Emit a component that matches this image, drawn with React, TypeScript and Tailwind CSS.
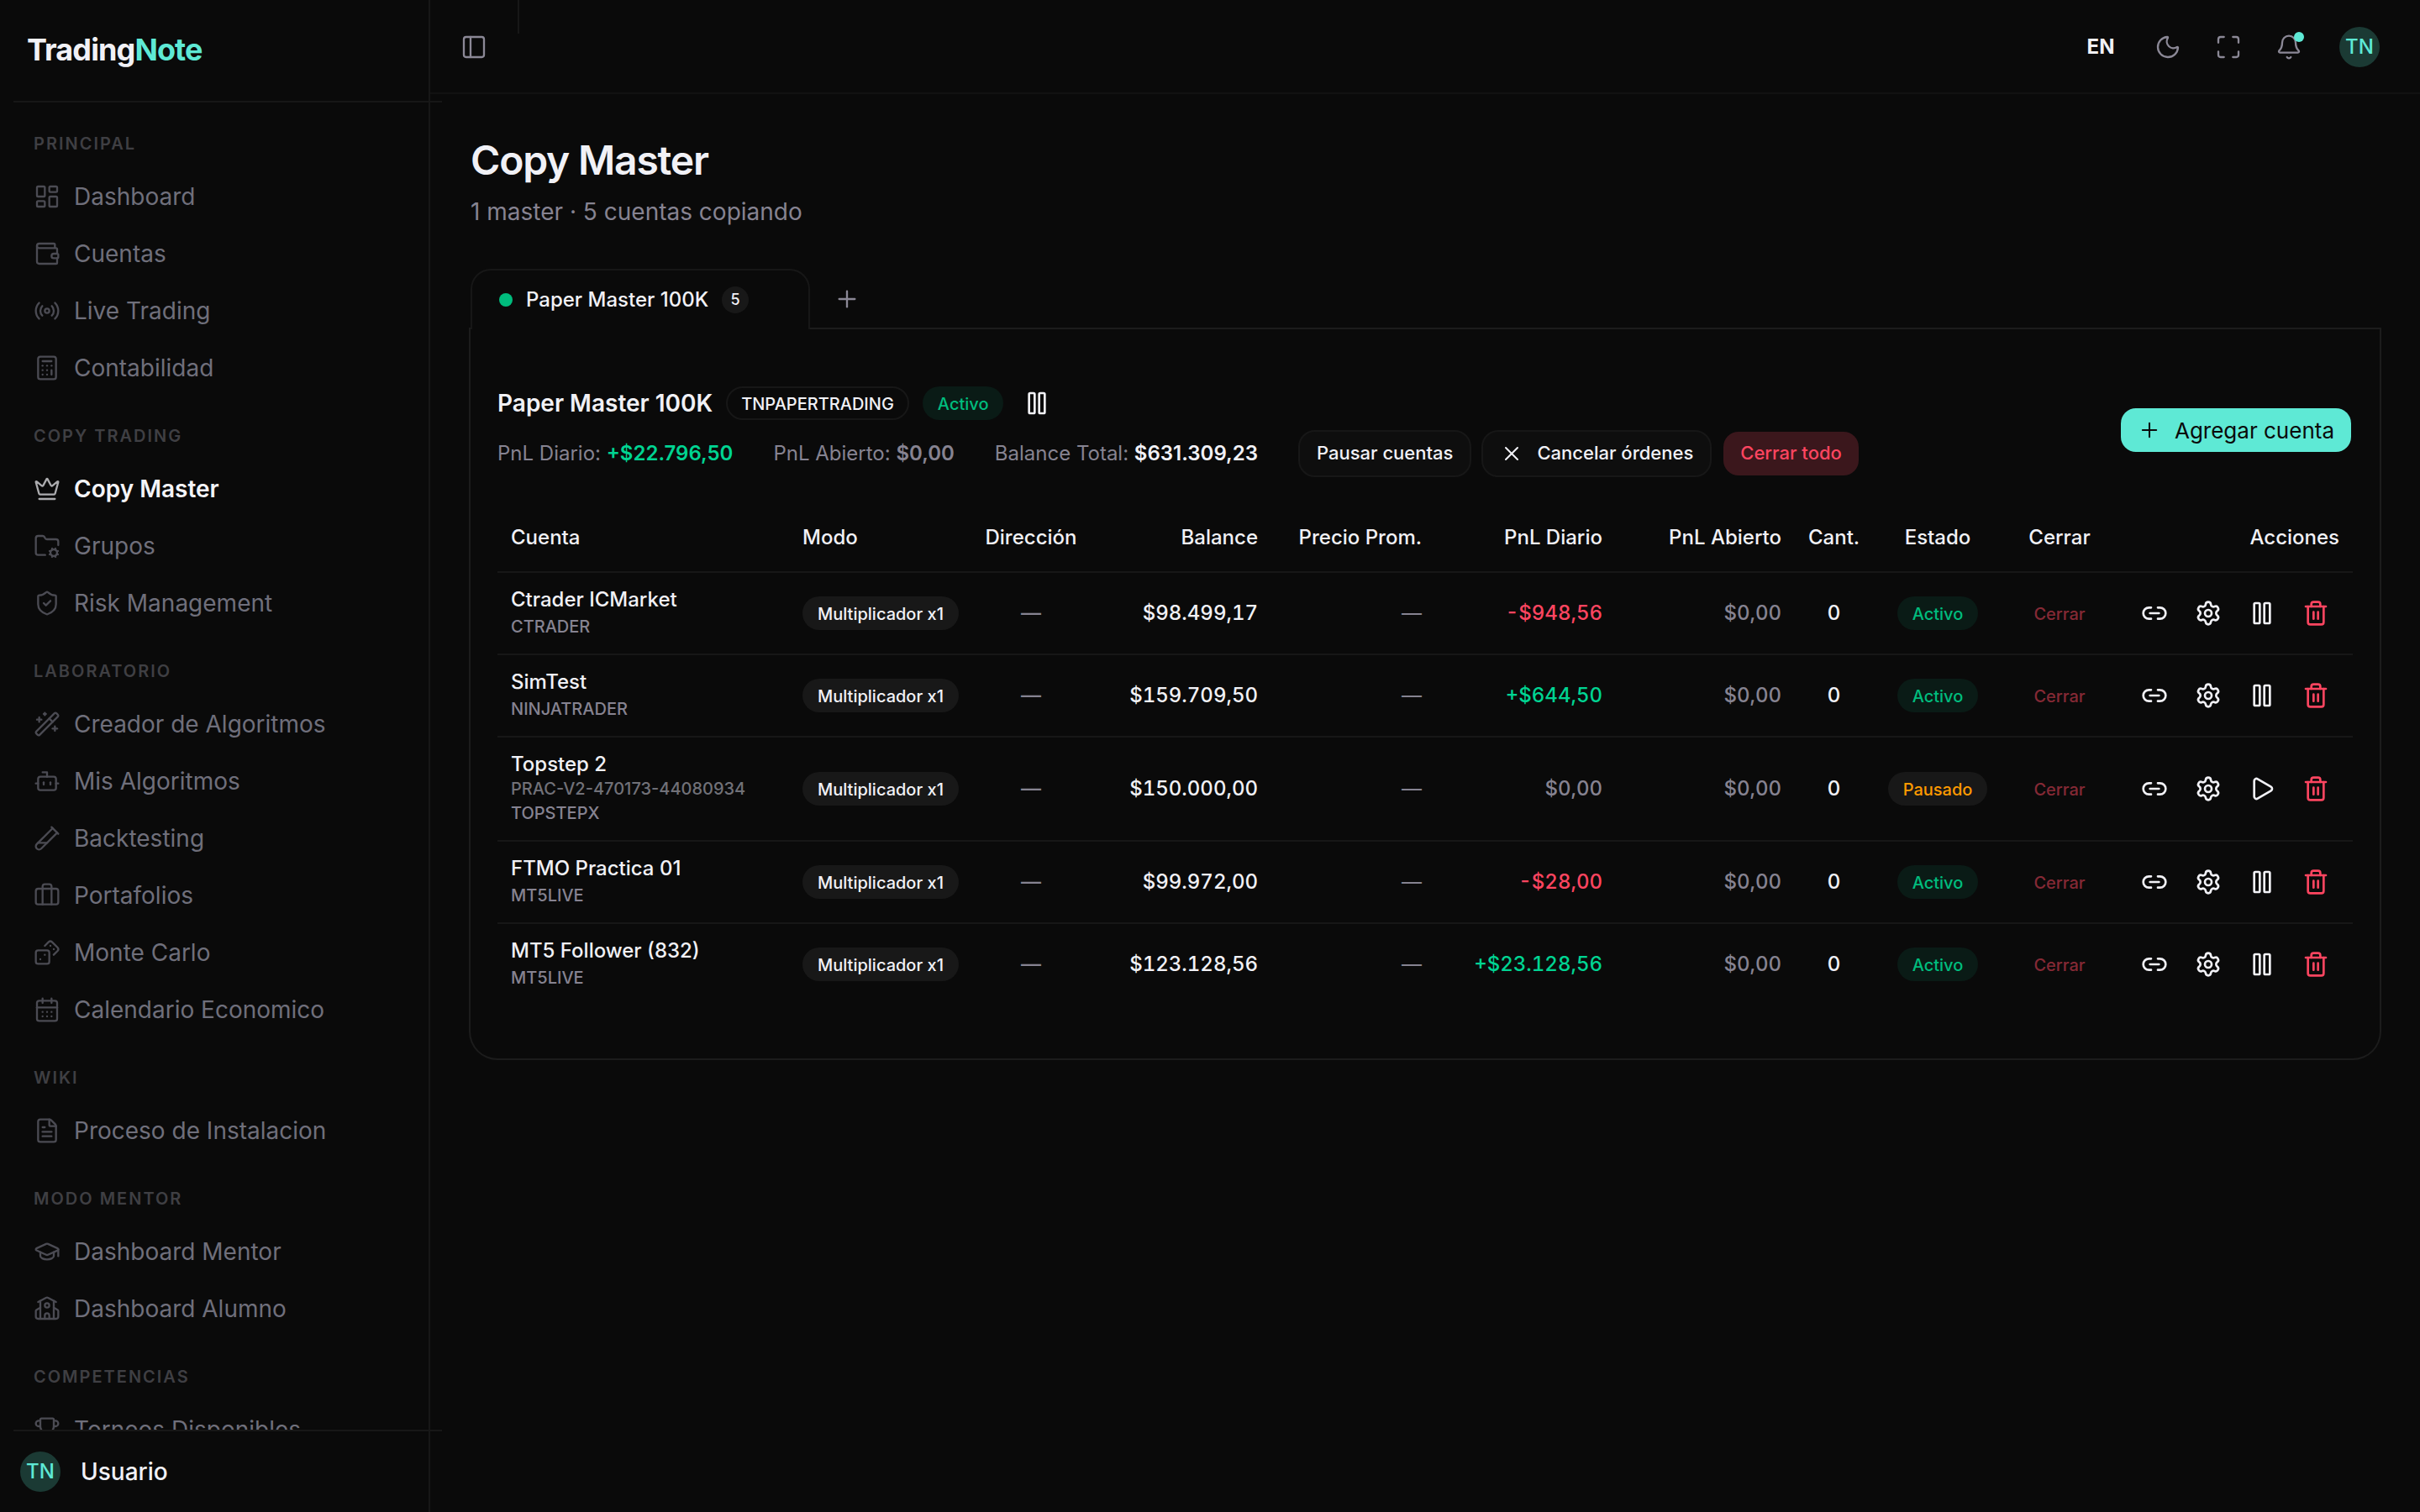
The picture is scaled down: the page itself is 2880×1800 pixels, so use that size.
import React from "react";
import {
  Bell,
  Bot,
  Briefcase,
  Calculator,
  CalendarDays,
  Crown,
  Dices,
  FileText,
  FolderCog,
  GraduationCap,
  LayoutDashboard,
  Link2,
  LucideIcon,
  Maximize,
  Moon,
  PanelLeft,
  Pause,
  Play,
  Plus,
  Radio,
  School,
  Settings,
  ShieldCheck,
  TestTubeDiagonal,
  Trash2,
  Trophy,
  Wallet,
  WandSparkles,
  X,
} from "lucide-react";

interface INavItem {
  label: string;
  icon: LucideIcon;
  active?: boolean;
}

interface INavGroup {
  title: string;
  items: INavItem[];
}

interface IAccount {
  name: string;
  detail?: string;
  platform: string;
  balance: string;
  daily: string;
  paused?: boolean;
}

const navGroups: INavGroup[] = [
  {
    title: "PRINCIPAL",
    items: [
      { label: "Dashboard", icon: LayoutDashboard },
      { label: "Cuentas", icon: Wallet },
      { label: "Live Trading", icon: Radio },
      { label: "Contabilidad", icon: Calculator },
    ],
  },
  {
    title: "COPY TRADING",
    items: [
      { label: "Copy Master", icon: Crown, active: true },
      { label: "Grupos", icon: FolderCog },
      { label: "Risk Management", icon: ShieldCheck },
    ],
  },
  {
    title: "LABORATORIO",
    items: [
      { label: "Creador de Algoritmos", icon: WandSparkles },
      { label: "Mis Algoritmos", icon: Bot },
      { label: "Backtesting", icon: TestTubeDiagonal },
      { label: "Portafolios", icon: Briefcase },
      { label: "Monte Carlo", icon: Dices },
      { label: "Calendario Economico", icon: CalendarDays },
    ],
  },
  {
    title: "WIKI",
    items: [{ label: "Proceso de Instalacion", icon: FileText }],
  },
  {
    title: "MODO MENTOR",
    items: [
      { label: "Dashboard Mentor", icon: GraduationCap },
      { label: "Dashboard Alumno", icon: School },
    ],
  },
  {
    title: "COMPETENCIAS",
    items: [{ label: "Torneos Disponibles", icon: Trophy }],
  },
];

const accounts: IAccount[] = [
  { name: "Ctrader ICMarket", platform: "CTRADER", balance: "$98.499,17", daily: "-$948,56" },
  { name: "SimTest", platform: "NINJATRADER", balance: "$159.709,50", daily: "+$644,50" },
  {
    name: "Topstep 2",
    detail: "PRAC-V2-470173-44080934",
    platform: "TOPSTEPX",
    balance: "$150.000,00",
    daily: "$0,00",
    paused: true,
  },
  { name: "FTMO Practica 01", platform: "MT5LIVE", balance: "$99.972,00", daily: "-$28,00" },
  { name: "MT5 Follower (832)", platform: "MT5LIVE", balance: "$123.128,56", daily: "+$23.128,56" },
];

// green for gains, red for losses, grey when flat
const pnlColor = (value: string) => {
  if (value.startsWith("+")) return "text-[#00d492]";
  if (value.startsWith("-")) return "text-[#ff4560]";
  return "text-[#868391]";
};

function Avatar() {
  return (
    <span className="flex size-12 shrink-0 items-center justify-center rounded-full bg-[#1b3a34] text-2xl font-medium text-[#5ee9d5]">
      TN
    </span>
  );
}

function StatusBadge({ paused = false }: { paused?: boolean }) {
  return (
    <span
      className={`inline-flex h-10 items-center rounded-full px-[18px] pt-0.5 text-xl font-medium whitespace-nowrap ${
        paused ? "bg-[#181818] text-[#fe9a00]" : "bg-[#0a1b16] text-[#00bc7d]"
      }`}
    >
      {paused ? "Pausado" : "Activo"}
    </span>
  );
}

function Sidebar() {
  return (
    <aside className="flex w-[512px] shrink-0 flex-col border-r-2 border-[#171717]">
      <div className="flex h-[120px] items-center pb-0.5 pl-8">
        <a href="#" className="text-4xl font-bold tracking-tight">
          Trading<span className="text-[#5ee9d5]">Note</span>
        </a>
      </div>
      <div className="ml-4 h-0.5 w-full shrink-0 bg-[#171717]" />
      <nav className="flex min-h-0 flex-1 flex-col gap-4 overflow-y-auto px-4 pt-4 [scrollbar-width:none]">
        {navGroups.map((group) => (
          <div key={group.title} className="shrink-0">
            <h2 className="flex h-16 items-center px-6 pt-0.5 text-xl font-semibold tracking-widest text-[#3f3f43]">
              {group.title}
            </h2>
            <ul className="flex flex-col gap-1">
              {group.items.map(({ label, icon: Icon, active }) => (
                <li key={label}>
                  <a
                    href="#"
                    className={`flex h-16 items-center gap-4 px-6 text-[28px] ${
                      active ? "font-semibold text-[#f4f4f8]" : "text-[#6f6f7b]"
                    }`}
                  >
                    <Icon
                      strokeWidth={1.75}
                      className={`size-8 shrink-0 ${active ? "text-[#acacaf]" : "text-[#4b4b53]"}`}
                    />
                    {label}
                  </a>
                </li>
              ))}
            </ul>
          </div>
        ))}
      </nav>
      <div className="ml-4 h-0.5 w-full shrink-0 bg-[#171717]" />
      <button type="button" className="flex h-24 shrink-0 items-center gap-6 px-6 text-[28px] font-medium">
        <Avatar />
        Usuario
      </button>
    </aside>
  );
}

function TopBar() {
  return (
    <header className="flex h-28 shrink-0 items-center justify-between border-b-2 border-[#121212] pr-12 pl-5">
      <div className="flex h-full items-center gap-5">
        <button
          type="button"
          aria-label="Menu"
          className="flex size-16 items-center justify-center pt-0.5 text-[#8b8896]"
        >
          <PanelLeft strokeWidth={1.75} className="size-8" />
        </button>
        <div className="h-10 w-0.5 self-start bg-[#171717]" />
      </div>
      <div className="flex items-center gap-2 pt-0.5 text-[#8b8896]">
        <button type="button" className="h-16 w-20 text-2xl font-bold text-[#f1f1f6]">
          EN
        </button>
        <button type="button" aria-label="Tema" className="flex size-16 items-center justify-center">
          <Moon strokeWidth={1.75} className="size-8" />
        </button>
        <button type="button" aria-label="Pantalla completa" className="flex size-16 items-center justify-center">
          <Maximize strokeWidth={1.75} className="size-8" />
        </button>
        <button
          type="button"
          aria-label="Notificaciones"
          className="relative flex size-16 items-center justify-center"
        >
          <Bell strokeWidth={1.75} className="size-8" />
          <span className="absolute top-3.5 right-3.5 size-3 rounded-full bg-[#5ee9d5]" />
        </button>
        <button type="button" aria-label="Perfil" className="ml-5">
          <Avatar />
        </button>
      </div>
    </header>
  );
}

function MasterTabs() {
  return (
    <div className="flex h-[72px] items-center gap-3" role="tablist">
      <button
        type="button"
        role="tab"
        aria-selected="true"
        className="relative z-10 flex h-full items-center gap-4 rounded-t-3xl border-2 border-b-0 border-[#171717] bg-[#0a0a0a] pr-[71px] pl-8 text-2xl font-medium"
      >
        <span className="size-4 rounded-full bg-[#00bc7d]" />
        Paper Master 100K
        <span className="flex h-8 min-w-8 items-center justify-center rounded-full bg-[#181818] text-lg">5</span>
      </button>
      <button
        type="button"
        aria-label="Nuevo master"
        className="flex size-16 items-center justify-center text-[#8b8896]"
      >
        <Plus strokeWidth={1.75} className="size-8" />
      </button>
    </div>
  );
}

function MasterHeader() {
  return (
    <div className="mb-8 flex items-center justify-between">
      <div className="flex flex-col gap-2">
        <div className="flex h-12 items-center gap-4">
          <h2 className="text-[28px] font-semibold">Paper Master 100K</h2>
          <span className="flex h-10 items-center rounded-full border-2 border-[#171717] px-4 pt-0.5 text-xl font-medium">
            TNPAPERTRADING
          </span>
          <StatusBadge />
          <button type="button" aria-label="Pausar master" className="flex size-12 items-center justify-center">
            <Pause className="size-8" />
          </button>
        </div>
        <div className="flex items-center gap-12 text-2xl text-[#868391]">
          <span>
            PnL Diario: <span className="font-semibold text-[#00d492]">+$22.796,50</span>
          </span>
          <span>
            PnL Abierto: <span className="font-semibold">$0,00</span>
          </span>
          <span>
            Balance Total: <span className="font-semibold text-[#f1f1f6]">$631.309,23</span>
          </span>
          <div className="flex gap-3 text-[22px] font-medium text-[#f1f1f6]">
            <button type="button" className="h-14 rounded-[20px] border-2 border-[#171717] bg-[#0e0e0e] px-5">
              Pausar cuentas
            </button>
            <button
              type="button"
              className="flex h-14 items-center gap-4 rounded-[20px] border-2 border-[#171717] bg-[#0e0e0e] px-5"
            >
              <X strokeWidth={1.75} className="size-7" />
              Cancelar órdenes
            </button>
            <button
              type="button"
              className="h-14 rounded-[20px] border-2 border-transparent bg-[#3b171c] bg-clip-padding px-5 text-[#ff4560]"
            >
              Cerrar todo
            </button>
          </div>
        </div>
      </div>
      <button
        type="button"
        className="flex h-14 items-center gap-4 rounded-[20px] border-2 border-transparent bg-[#5ee9d5] bg-clip-padding px-5 text-[26px] text-[#0a0a0a]"
      >
        <Plus strokeWidth={1.75} className="size-7" />
        Agregar cuenta
      </button>
    </div>
  );
}

function AccountRow({ account }: { account: IAccount }) {
  return (
    <tr className="border-b-2 border-[#171717] last:border-b-0">
      <td className="p-4">
        <div className="leading-8">{account.name}</div>
        {account.detail && <div className="text-xl leading-[26px] text-[#717178]">{account.detail}</div>}
        <div className="text-xl leading-8 text-[#868391]">{account.platform}</div>
      </td>
      <td className="px-4">
        <span className="inline-flex h-10 items-center rounded-full bg-[#181818] px-[18px] pt-0.5 text-xl whitespace-nowrap">
          Multiplicador x1
        </span>
      </td>
      <td className="px-4 text-center text-[#868391]">—</td>
      <td className="px-4 text-right tabular-nums">{account.balance}</td>
      <td className="px-4 text-right font-normal text-[#868391]">—</td>
      <td className={`px-4 text-right tabular-nums ${pnlColor(account.daily)}`}>{account.daily}</td>
      <td className="px-4 text-right text-[#868391] tabular-nums">$0,00</td>
      <td className="px-4 text-center">0</td>
      <td className="px-4 text-center">
        <StatusBadge paused={account.paused} />
      </td>
      <td className="px-4 text-center">
        <button type="button" className="text-xl text-[#852935]">
          Cerrar
        </button>
      </td>
      <td className="px-4">
        <div className="flex justify-end gap-2">
          <button type="button" aria-label="Vincular" className="flex size-14 items-center justify-center">
            <Link2 className="size-8" />
          </button>
          <button type="button" aria-label="Configurar" className="flex size-14 items-center justify-center">
            <Settings className="size-8" />
          </button>
          <button
            type="button"
            aria-label={account.paused ? "Reanudar" : "Pausar"}
            className="flex size-14 items-center justify-center"
          >
            {account.paused ? <Play className="size-8" /> : <Pause className="size-8" />}
          </button>
          <button
            type="button"
            aria-label="Eliminar"
            className="flex size-14 items-center justify-center text-[#ff4560]"
          >
            <Trash2 className="size-8" />
          </button>
        </div>
      </td>
    </tr>
  );
}

function AccountsTable() {
  return (
    <table className="w-full table-fixed text-2xl font-medium">
      <colgroup>
        <col className="w-[347px]" />
        <col className="w-[217px]" />
        <col className="w-[142px]" />
        <col className="w-[215px]" />
        <col className="w-[195px]" />
        <col className="w-[215px]" />
        <col className="w-[213px]" />
        <col className="w-[93px]" />
        <col className="w-[154px]" />
        <col className="w-[136px]" />
        <col className="w-[281px]" />
      </colgroup>
      <thead>
        <tr className="h-[81px] border-b-2 border-[#171717] whitespace-nowrap">
          <th className="px-4 text-left font-medium">Cuenta</th>
          <th className="px-4 text-left font-medium">Modo</th>
          <th className="px-4 text-center font-medium">Dirección</th>
          <th className="px-4 text-right font-medium">Balance</th>
          <th className="px-4 text-right font-medium">Precio Prom.</th>
          <th className="px-4 text-right font-medium">PnL Diario</th>
          <th className="px-4 text-right font-medium">PnL Abierto</th>
          <th className="px-4 text-center font-medium">Cant.</th>
          <th className="px-4 text-center font-medium">Estado</th>
          <th className="px-4 text-center font-medium">Cerrar</th>
          <th className="px-4 text-right font-medium">Acciones</th>
        </tr>
      </thead>
      <tbody>
        {accounts.map((account) => (
          <AccountRow key={account.name} account={account} />
        ))}
      </tbody>
    </table>
  );
}

export default function App() {
  return (
    <div className="flex h-screen overflow-hidden bg-[#0a0a0a] font-['Inter',sans-serif] text-[#f1f1f6]">
      <Sidebar />
      <div className="flex min-w-0 flex-1 flex-col">
        <TopBar />
        <main className="min-h-0 flex-1 px-12 pt-12">
          <h1 className="text-5xl leading-[62px] font-semibold tracking-tight">Copy Master</h1>
          <p className="mt-2.5 mb-12 text-[28px] leading-10 text-[#868391]">1 master · 5 cuentas copiando</p>
          <MasterTabs />
          <section className="rounded-b-[32px] px-8 py-16 shadow-[0_0_0_2px_#1c1c1c]">
            <MasterHeader />
            <AccountsTable />
          </section>
        </main>
      </div>
    </div>
  );
}
